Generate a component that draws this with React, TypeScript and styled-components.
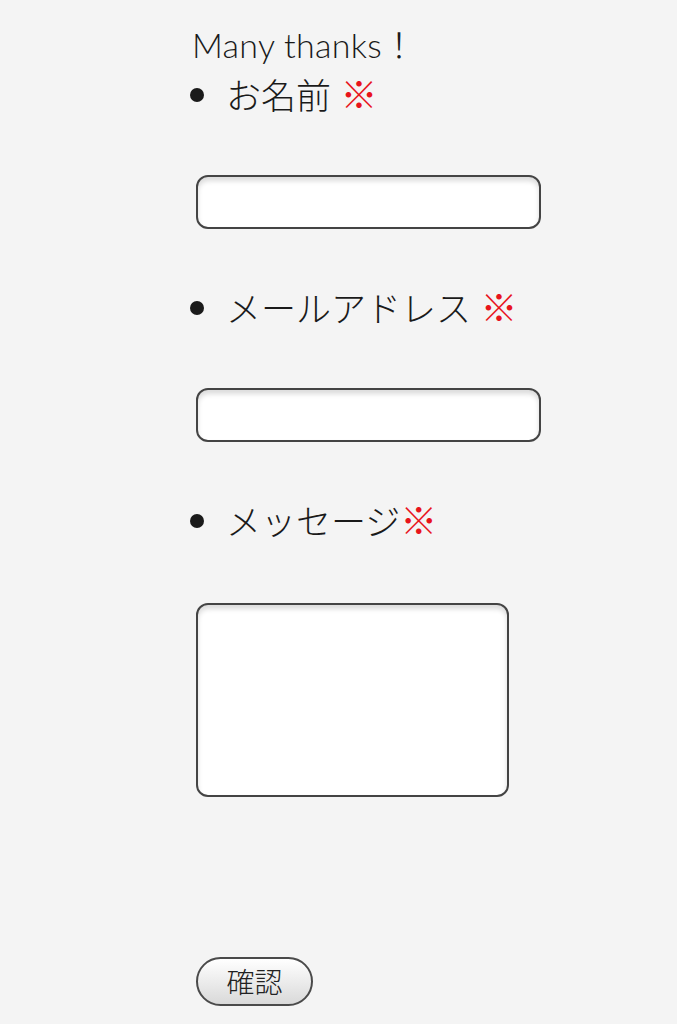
import React from "react";
import styled, { createGlobalStyle } from "styled-components";

const GlobalStyles = createGlobalStyle`
  html, body {
    margin: 0;
    background: #f4f4f4;
  }
  body {
    font-family: Lato, "Noto Sans CJK JP", sans-serif;
    color: #1a1a1a;
  }
`;

const fields = [
  { label: "お名前", spaced: true, multiline: false },
  { label: "メールアドレス", spaced: true, multiline: false },
  { label: "メッセージ", spaced: false, multiline: true }
];

const App = () => (
  <>
    <GlobalStyles />
    <Page>
      <Heading>Many thanks！</Heading>
      <FieldList>
        {fields.map((field, i) => (
          <FieldItem key={field.label} first={i === 0}>
            <Label>
              {field.label}
              {field.spaced ? " " : ""}
              <Required>※</Required>
            </Label>
            {field.multiline ? <TextArea /> : <TextInput type="text" />}
          </FieldItem>
        ))}
      </FieldList>
      <SubmitButton type="button">確認</SubmitButton>
    </Page>
  </>
);
export default App;

const Page = styled.div({
  display: "flex",
  flexDirection: "column",
  alignItems: "flex-start",
  minHeight: "1024px",
  boxSizing: "border-box",
  padding: "24px 0 0 192px"
});

const Heading = styled.h1({
  margin: 0,
  fontSize: "34px",
  fontWeight: 300,
  lineHeight: "42px",
  letterSpacing: "0.3px"
});

const FieldList = styled.ul({
  listStyle: "none",
  margin: 0,
  padding: 0
});

const FieldItem = styled.li<{ first?: boolean }>(props => ({
  display: "flex",
  flexDirection: "column",
  alignItems: "flex-start",
  marginTop: props.first ? "4px" : "54px"
}));

const Label = styled.div({
  position: "relative",
  paddingLeft: "34px",
  fontSize: "35px",
  fontWeight: 300,
  lineHeight: "50px",
  whiteSpace: "pre",
  "&::before": {
    content: '""',
    position: "absolute",
    left: "-2px",
    top: "18px",
    width: "14px",
    height: "14px",
    borderRadius: "50%",
    background: "#1a1a1a"
  }
});

const Required = styled.span({
  color: "#e8141c",
  fontSize: "37px"
});

const fieldBox = {
  boxSizing: "border-box" as const,
  marginLeft: "4px",
  border: "2px solid #444",
  borderRadius: "12px",
  background: "#fff",
  boxShadow: "inset 0 4px 5px rgba(0, 0, 0, 0.14)",
  outline: "none",
  fontFamily: "inherit",
  fontSize: "20px"
};

const TextInput = styled.input({
  ...fieldBox,
  marginTop: "55px",
  width: "345px",
  height: "54px",
  padding: "0 10px"
});

const TextArea = styled.textarea({
  ...fieldBox,
  marginTop: "57px",
  width: "313px",
  height: "194px",
  resize: "none",
  padding: "8px 10px"
});

const SubmitButton = styled.button({
  boxSizing: "border-box",
  marginLeft: "4px",
  marginTop: "160px",
  width: "117px",
  height: "49px",
  border: "2px solid #4a4a4a",
  borderRadius: "25px",
  background: "linear-gradient(#ffffff, #d9d9d9)",
  color: "#222",
  fontFamily: "Lato, \"Noto Sans CJK JP\", sans-serif",
  fontSize: "28px",
  fontWeight: 300,
  lineHeight: "1",
  padding: 0
});
